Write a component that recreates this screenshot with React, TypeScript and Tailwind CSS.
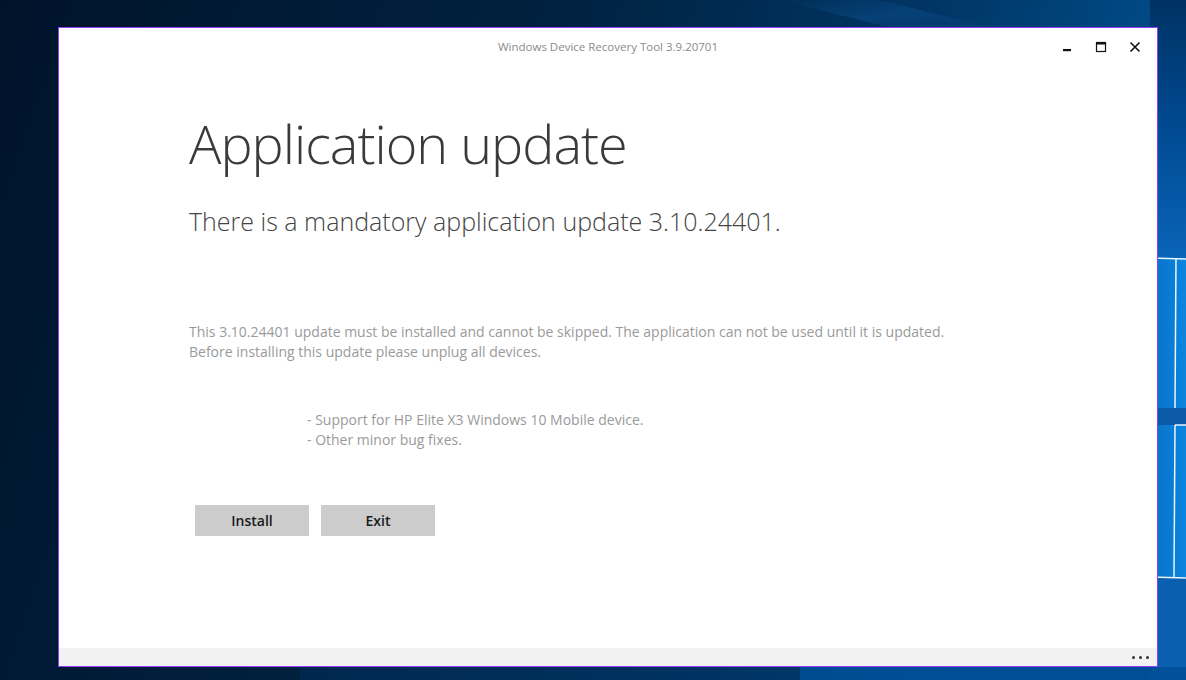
import React from "react";

const font = { fontFamily: '"Open Sans", "Noto Sans", sans-serif' };

const Wallpaper = () => (
  <svg
    className="absolute inset-0 h-full w-full"
    viewBox="0 0 1186 680"
    preserveAspectRatio="none"
  >
    <defs>
      <linearGradient id="bg" x1="0" y1="0" x2="1" y2="0.2">
        <stop offset="0" stopColor="#00132b" />
        <stop offset="0.45" stopColor="#00213f" />
        <stop offset="0.75" stopColor="#003563" />
        <stop offset="1" stopColor="#00508f" />
      </linearGradient>
      <linearGradient id="pane" x1="0" y1="0" x2="1" y2="0">
        <stop offset="0" stopColor="#0a6fc4" />
        <stop offset="1" stopColor="#0a86e0" />
      </linearGradient>
      <linearGradient id="strip" x1="0" y1="0" x2="0" y2="1">
        <stop offset="0" stopColor="#003263" />
        <stop offset="0.5" stopColor="#004a92" />
        <stop offset="1" stopColor="#0a64b8" />
      </linearGradient>
      <linearGradient id="streak" x1="0" y1="0" x2="1" y2="1">
        <stop offset="0" stopColor="#0a4a85" stopOpacity="0" />
        <stop offset="0.5" stopColor="#0a4a85" stopOpacity="0.6" />
        <stop offset="1" stopColor="#0a4a85" stopOpacity="0" />
      </linearGradient>
    </defs>
    <rect width="1186" height="680" fill="url(#bg)" />
    <polygon points="780,0 880,0 1000,30 900,30" fill="url(#streak)" />
    <rect x="1150" y="0" width="36" height="258" fill="url(#strip)" />
    <rect x="1150" y="258" width="36" height="150" fill="url(#pane)" />
    <rect x="1150" y="408" width="36" height="17" fill="#0a5aa8" />
    <rect x="1150" y="425" width="36" height="152" fill="url(#pane)" />
    <rect x="1150" y="577" width="36" height="103" fill="#0a5fae" />
    <rect x="300" y="667" width="886" height="13" fill="#00305f" opacity="0.5" />
    <rect x="800" y="667" width="386" height="13" fill="#0055a2" opacity="0.7" />
    <g stroke="#e8f6ff" strokeWidth="1.5">
      <line x1="1150" y1="258" x2="1186" y2="259" />
      <line x1="1176" y1="258" x2="1175" y2="408" />
      <line x1="1175" y1="425" x2="1186" y2="425" />
      <line x1="1175" y1="425" x2="1174" y2="577" />
      <line x1="1150" y1="577" x2="1186" y2="578" />
    </g>
  </svg>
);

const WindowControls = () => (
  <div className="flex items-center gap-[22px] pr-[16px]">
    <svg width="12" height="12" viewBox="0 0 12 12">
      <rect x="2" y="8" width="8" height="2.2" fill="#111" />
    </svg>
    <svg width="12" height="12" viewBox="0 0 12 12">
      <rect x="1.5" y="1.5" width="9" height="9" fill="none" stroke="#111" strokeWidth="1.2" />
      <rect x="1" y="1" width="10" height="2.5" fill="#111" />
    </svg>
    <svg width="12" height="12" viewBox="0 0 12 12">
      <path d="M1.5 1.5 L10.5 10.5 M10.5 1.5 L1.5 10.5" stroke="#111" strokeWidth="1.6" />
    </svg>
  </div>
);

export default function App() {
  return (
    <div className="relative h-[680px] w-[1186px] overflow-hidden" style={font}>
      <Wallpaper />
      <div className="relative pl-[58px] pt-[27px]">
        <div className="flex h-[640px] w-[1100px] flex-col border border-[#8f3dff] bg-white">
          <div className="relative flex h-[38px] items-center justify-end">
            <span className="absolute inset-x-0 top-[10px] text-center text-[11.5px] text-[#8a8a8a]">
              Windows Device Recovery Tool 3.9.20701
            </span>
            <WindowControls />
          </div>
          <div className="flex-1 pl-[130px]">
            <h1 className="mt-[50px] text-[54px] font-light leading-none tracking-[-1px] text-[#3a3a3a]">
              Application update
            </h1>
            <p className="mt-[39px] text-[25px] font-light leading-none text-[#444]">
              There is a mandatory application update 3.10.24401.
            </p>
            <div className="mt-[88px] text-[14px] leading-[20px] text-[#9a9a9a]">
              <p>
                This 3.10.24401 update must be installed and cannot be skipped. The application can not be used until it is updated.
              </p>
              <p>Before installing this update please unplug all devices.</p>
            </div>
            <ul className="ml-[118px] mt-[48px] text-[14px] leading-[20px] text-[#9a9a9a]">
              <li>- Support for HP Elite X3 Windows 10 Mobile device.</li>
              <li>- Other minor bug fixes.</li>
            </ul>
            <div className="ml-[6px] mt-[55px] flex gap-[12px]">
              <button className="h-[31px] w-[114px] bg-[#cccccc] text-[14px] font-semibold text-[#1a1a1a]">
                Install
              </button>
              <button className="h-[31px] w-[114px] bg-[#cccccc] text-[14px] font-semibold text-[#1a1a1a]">
                Exit
              </button>
            </div>
          </div>
          <div className="flex h-[18px] items-center justify-end gap-[4px] bg-[#f2f2f2] pr-[8px]">
            <span className="h-[3px] w-[3px] rounded-full bg-[#333]" />
            <span className="h-[3px] w-[3px] rounded-full bg-[#333]" />
            <span className="h-[3px] w-[3px] rounded-full bg-[#333]" />
          </div>
        </div>
      </div>
    </div>
  );
}
